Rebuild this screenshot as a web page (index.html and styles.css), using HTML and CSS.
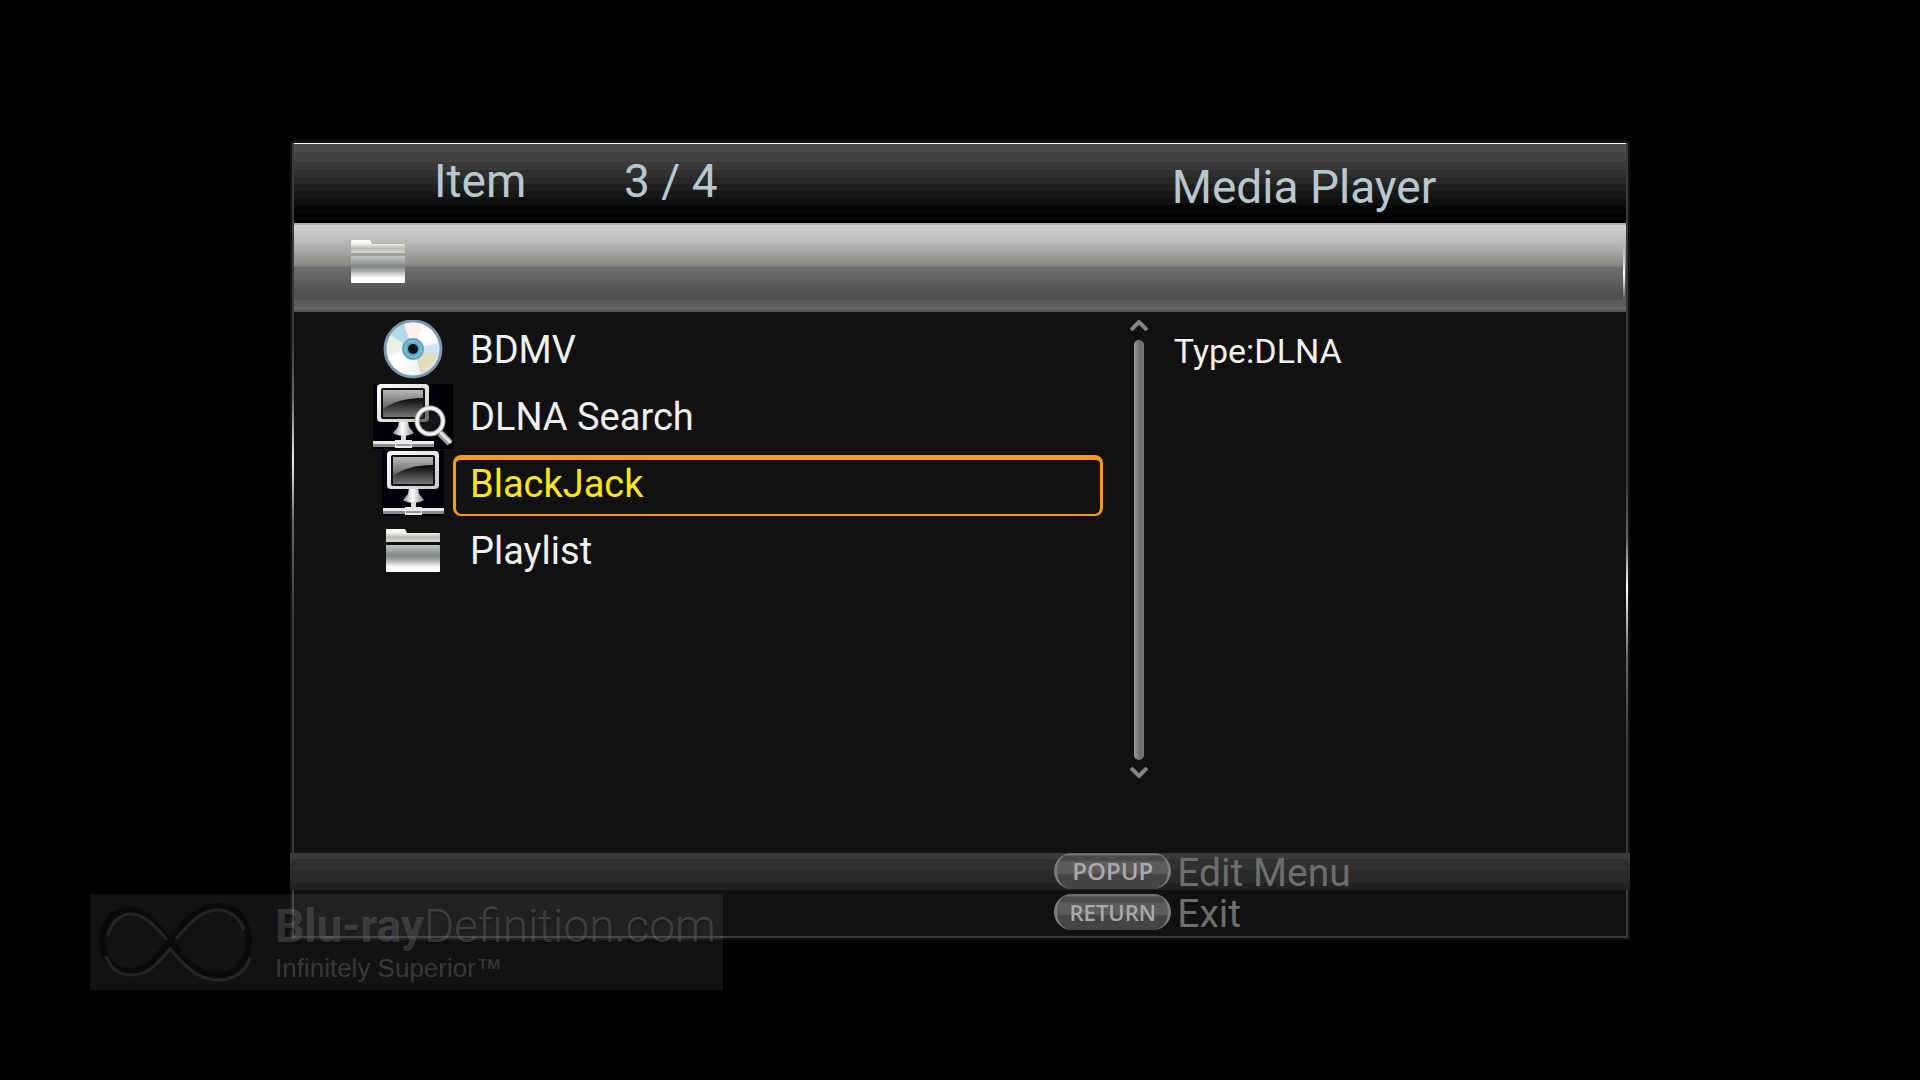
FILE: index.html
```html
<!DOCTYPE html>
<html lang="en">
<head>
<meta charset="utf-8">
<title>Media Player</title>
<link rel="stylesheet" href="styles.css">
</head>
<body>

<!-- shared icon parts -->
<svg class="defs" width="0" height="0" aria-hidden="true">
  <defs>
    <linearGradient id="tab" x1="0" y1="0" x2="0" y2="1">
      <stop offset="0" stop-color="#ffffff"/>
      <stop offset=".3" stop-color="#f2f1ee"/>
      <stop offset=".65" stop-color="#b9b9b0"/>
      <stop offset="1" stop-color="#dcdbd5"/>
    </linearGradient>
    <linearGradient id="front" x1="0" y1="0" x2="0" y2="1">
      <stop offset="0" stop-color="#c4c6c5"/>
      <stop offset=".4" stop-color="#7f8583"/>
      <stop offset=".6" stop-color="#b5b7b6"/>
      <stop offset=".8" stop-color="#fafafa"/>
      <stop offset="1" stop-color="#ffffff"/>
    </linearGradient>
    <linearGradient id="frame" x1="0" y1="0" x2="1" y2="1">
      <stop offset="0" stop-color="#ffffff"/>
      <stop offset="1" stop-color="#c8c8c8"/>
    </linearGradient>
    <linearGradient id="glass" x1="0" y1="0" x2="0" y2="1">
      <stop offset="0" stop-color="#b8b8b8"/>
      <stop offset="1" stop-color="#3a3a3a"/>
    </linearGradient>
    <linearGradient id="shade" x1="0" y1="0" x2="0" y2="1">
      <stop offset="0" stop-color="#050505"/>
      <stop offset="1" stop-color="#777777"/>
    </linearGradient>
    <linearGradient id="stand" x1="0" y1="0" x2="1" y2="0">
      <stop offset="0" stop-color="#8c8c8c"/>
      <stop offset=".45" stop-color="#ffffff"/>
      <stop offset="1" stop-color="#8c8c8c"/>
    </linearGradient>
    <linearGradient id="disc" x1="0" y1="0" x2="1" y2="1">
      <stop offset="0" stop-color="#e9eef2"/>
      <stop offset=".5" stop-color="#ffffff"/>
      <stop offset="1" stop-color="#d5e4ef"/>
    </linearGradient>

    <symbol id="folder" viewBox="0 0 54 43">
      <path d="M1 0H19L21 4H53Q54 4 54 5V13H0V1Q0 0 1 0Z" fill="url(#tab)"/>
      <path d="M1 16H53Q54 16 54 17V42Q54 43 53 43H1Q0 43 0 42V17Q0 16 1 16Z" fill="url(#front)"/>
    </symbol>

    <symbol id="monitor" viewBox="0 0 62 65">
      <path d="M27 37H36L37 43L42 49Q40 51 31 52Q23 51 21 49L26 43Z" fill="url(#stand)"/>
      <path d="M29 51H34V58H29Z" fill="#d8d8d8"/>
      <rect x="5" y="0" width="52" height="38" rx="4" fill="url(#frame)"/>
      <rect x="9" y="4" width="44" height="31" rx="2" fill="#111"/>
      <rect x="11" y="6" width="40" height="27" fill="url(#glass)"/>
      <path d="M11 25Q26 14 51 14V33H11Z" fill="url(#shade)"/>
      <path d="M1 57H62V60H1Z" fill="#ececec"/>
      <path d="M1 60H62V63H1Z" fill="#8a8a8a"/>
      <path d="M23 56H40V64H23Z" fill="#e8e8e8"/>
      <path d="M24 60H39V62H24Z" fill="#999"/>
    </symbol>
  </defs>
</svg>

<main class="player">
  <header class="header">
    <div class="counter"><span class="counter-label">Item</span><span>3 / 4</span></div>
    <h1>Media Player</h1>
  </header>

  <div class="path-bar">
    <svg class="folder" role="img" aria-label="Folder"><use href="#folder"/></svg>
  </div>

  <div class="content">
    <ul class="list">
      <li>
        <a href="#bdmv">
          <span class="icon">
            <svg width="60" height="60" viewBox="0 0 60 60">
              <circle cx="30" cy="29" r="28" fill="url(#disc)" stroke="#7d97ae" stroke-width="3"/>
              <path d="M30 29L8 16Q12 7 21 4Z" fill="#b4d9e8"/>
              <path d="M30 29L8 16Q3 25 4 35Z" fill="#eceee4"/>
              <path d="M30 29L21 4Q30 1 40 4Z" fill="#fdf1ee"/>
              <path d="M30 29L55 35Q50 48 38 54Z" fill="#e3dcba"/>
              <path d="M30 29L56 23Q57 29 55 36Z" fill="#cfe2f2"/>
              <circle cx="30" cy="29" r="11" fill="#5ba8c6"/>
              <circle cx="30" cy="29" r="8" fill="none" stroke="#7cbcd5" stroke-width="2"/>
              <circle cx="30" cy="29" r="5" fill="#0c1418"/>
            </svg>
          </span>
          <span class="name">BDMV</span>
        </a>
      </li>
      <li>
        <a href="#search">
          <span class="icon">
            <svg class="dark" width="80" height="65" viewBox="0 0 80 65">
              <rect x="71" width="9" height="65" fill="#000"/>
              <use href="#monitor" x="-1" width="62" height="65"/>
              <path d="M67 49L77 59" stroke="#9a9a9a" stroke-width="7"/>
              <path d="M67 48L78 59" stroke="#e4e4e4" stroke-width="3"/>
              <circle cx="57" cy="37" r="13" fill="#222" fill-opacity=".55" stroke="#a8a8a8" stroke-width="5"/>
              <circle cx="57" cy="37" r="13" fill="none" stroke="#f4f4f4" stroke-width="3"/>
            </svg>
          </span>
          <span class="name">DLNA Search</span>
        </a>
      </li>
      <li>
        <a class="selected" href="#blackjack" aria-current="true">
          <span class="icon">
            <svg class="dark" width="62" height="65"><use href="#monitor"/></svg>
          </span>
          <span class="name">BlackJack</span>
        </a>
      </li>
      <li>
        <a href="#playlist">
          <span class="icon"><svg class="folder"><use href="#folder"/></svg></span>
          <span class="name">Playlist</span>
        </a>
      </li>
    </ul>

    <div class="scroll">
      <svg width="18" height="11" viewBox="0 0 18 11"><path d="M1 10L9 2L17 10"/></svg>
      <div class="scroll-bar"></div>
      <svg width="18" height="11" viewBox="0 0 18 11"><path d="M1 1L9 9L17 1"/></svg>
    </div>

    <section class="info">Type:DLNA</section>
  </div>

  <footer class="footer">
    <div class="hints">
      <button type="button"><span class="key">POPUP</span>Edit Menu</button>
      <button type="button"><span class="key key-small">RETURN</span>Exit</button>
    </div>
  </footer>
</main>

<div class="watermark">
  <svg width="160" height="86" viewBox="0 0 160 86">
    <path class="groove" d="M72 43C56 24 48 12 32 12C15 12 4 26 4 43C4 61 16 73 32 73C50 73 58 60 72 43C88 24 100 8 120 8C140 8 151 25 151 43C151 61 138 78 120 78C100 78 88 63 72 43Z"/>
    <path class="edge" d="M10 38C13 25 22 16 32 16C48 16 56 28 69 42M78 41C92 25 102 12 120 12C132 12 142 20 146 32M8 58C13 71 22 77 33 77C51 77 59 66 72 51C88 69 100 82 120 82C136 82 148 74 152 60"/>
  </svg>
  <div>
    <div class="brand"><b>Blu-ray</b>Definition.com</div>
    <div class="tagline">Infinitely Superior™</div>
  </div>
</div>

</body>
</html>
```
FILE: styles.css
```css
* { box-sizing: border-box; }

body {
  margin: 0;
  min-height: 100vh;
  padding: 140px 290px;
  display: flex;
  background: #000;
  color: #f0f0ee;
  font-family: Roboto, "Liberation Sans", sans-serif;
}

svg { display: block; flex-shrink: 0; }
.defs { position: absolute; }
.folder { width: 54px; height: 43px; }

/* window */
.player {
  flex: 1;
  display: flex;
  flex-direction: column;
  padding: 3px 2px 2px;
  position: relative;
  background: #111;
}

/* side and bottom frame, with the light reflections */
.player::before {
  content: "";
  position: absolute;
  top: 3px;
  right: 2px;
  bottom: 2px;
  left: 2px;
  border-bottom: 2px solid #3a3a3a;
  background:
    linear-gradient(#3a3a3a 25%, #666 32%, #eee 40%, #666 48%, #3a3a3a 60%) left / 2px 100% no-repeat,
    linear-gradient(#3a3a3a 43%, #666 50%, #fff 56%, #666 65%, #3a3a3a 76%) right / 2px 100% no-repeat;
}

.header, .path-bar, .content { margin: 0 2px; position: relative; }

.header {
  display: flex;
  align-items: center;
  height: 80px;
  border-top: 1px solid #fff;
  background: linear-gradient(
    #4b4b4b 8px, #424242 8px 18px, #393939 18px 26px, #303030 26px 33px,
    #282828 33px 40px, #1f1f1f 40px 47px, #171717 47px 54px,
    #0f0f0f 54px 61px, #070707 61px 70px, #000 70px);
  color: #b8c8ce;
  font-size: 46px;
}

.counter { flex: 1; display: flex; padding: 0 0 6px 140px; }
.counter-label { width: 190px; }

h1 {
  width: 35%;
  margin: 0;
  padding: 6px 0 0 12px;
  font-size: 46px;
  font-weight: 400;
}

.path-bar {
  height: 89px;
  padding: 17px 57px;
  background: linear-gradient(
    #b0b0b0 2px, #cfcfcf 2px 6px, #b8b8b7 20px, #868683 43px,
    #6e6e6e 44px, #5c5c5c 62px, #505050 70px 77px,
    #5c5c5c 77px 84px, #686868 84px 87px, #555 87px);
}
.path-bar::after {
  content: "";
  position: absolute;
  top: 22px;
  right: 1px;
  width: 2px;
  height: 56px;
  background: linear-gradient(transparent, #fff, transparent);
}

/* file list */
.content { flex: 1; display: flex; }

.list {
  flex: 1;
  margin: 0;
  padding: 6px 27px 0 79px;
  list-style: none;
}
.list a {
  display: flex;
  height: 67px;
  color: inherit;
  font-size: 38px;
  text-decoration: none;
}
.icon {
  width: 80px;
  padding-bottom: 4px;
  display: flex;
  align-items: center;
  justify-content: center;
}
.dark { background: #00000c; }
.name {
  flex: 1;
  margin: 3px 0;
  padding-left: 14px;
  border: 3px solid transparent;
  border-width: 5px 3px 2px;
  border-radius: 8px;
  line-height: 48px;
}
.selected .name { border-color: #f59b1c; color: #ffe51a; }

.scroll {
  width: 30px;
  padding: 8px 0 75px;
  display: flex;
  flex-direction: column;
}
.scroll path { fill: none; stroke: #858585; stroke-width: 4; }
.scroll-bar {
  flex: 1;
  width: 10px;
  margin: 9px 4px 7px;
  border-radius: 5px;
  background: linear-gradient(90deg, #9c9c9a, #6c6c6c 6px, #777);
}

.info {
  width: 35%;
  padding: 19px 0 0 14px;
  font-size: 34px;
  line-height: 40px;
}

/* remote key hints */
.footer {
  height: 85px;
  margin: 0 -2px;
  padding: 0 4px;
  position: relative;
  background: linear-gradient(
    #3a3a3a 6px, #303030 6px 17px, #292929 17px 30px,
    #222 30px 37px, transparent 37px);
}
.hints { width: 43%; margin-left: auto; padding-left: 1px; }
.hints button {
  display: flex;
  height: 41px;
  padding: 0;
  border: 0;
  background: none;
  color: #6e6e6e;
  font: 39px/41px Roboto, "Liberation Sans", sans-serif;
}
.key {
  width: 117px;
  height: 36px;
  margin-right: 6px;
  border: solid #7c7c7c;
  border-width: 0 3px;
  border-radius: 18px;
  background: linear-gradient(#707070 2px, #4a4a4a 3px 8px, #5c5c5c 9px 20px, #444 22px);
  color: #aaa;
  font: 600 24px/36px "Open Sans", "Noto Sans", sans-serif;
  text-align: center;
}
.key-small { font-size: 22px; }

/* site mark laid over the corner */
.watermark {
  position: absolute;
  bottom: 90px;
  left: 90px;
  display: flex;
  gap: 17px;
  width: 633px;
  height: 96px;
  padding: 4px 8px;
  background: rgba(255, 255, 255, .07);
  color: rgba(255, 255, 255, .18);
  white-space: nowrap;
}
.groove { fill: none; stroke: #0a0a0a; stroke-width: 6; }
.edge { fill: none; stroke: #262626; stroke-width: 3; }
.brand {
  font-size: 46px;
  font-weight: 300;
  line-height: 56px;
  text-shadow: 0 2px 2px rgba(0, 0, 0, .3);
}
.brand b { font-weight: 700; }
.tagline {
  font-family: "Liberation Sans", sans-serif;
  font-size: 26px;
  line-height: 28px;
}
```
